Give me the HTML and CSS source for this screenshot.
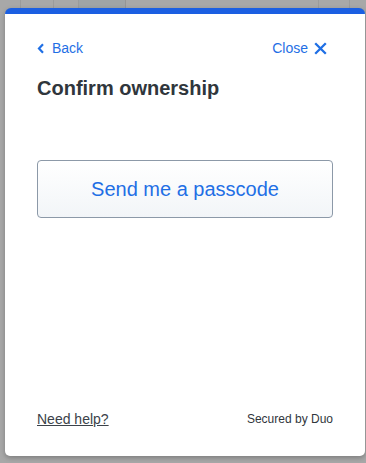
FILE: index.html
```html
<!DOCTYPE html>
<html lang="en">
<head>
<meta charset="utf-8">
<title>Confirm ownership</title>
<link rel="stylesheet" href="styles.css">
</head>
<body>
<div class="backdrop">
  <div class="bg-strip">
    <span class="bg-cell c1"></span>
    <span class="bg-cell c2"></span>
    <span class="bg-cell c3"></span>
  </div>
</div>
<div class="card">
  <div class="nav">
    <a class="link back" href="#">
      <svg width="8" height="11" viewBox="0 0 8 11"><path d="M6 1.2 L2 5.5 L6 9.8" fill="none" stroke="currentColor" stroke-width="2.2"/></svg>
      <span>Back</span>
    </a>
    <a class="link close" href="#">
      <span>Close</span>
      <svg width="13" height="13" viewBox="0 0 13 13"><path d="M1.2 1.2 L11.8 11.8 M11.8 1.2 L1.2 11.8" fill="none" stroke="currentColor" stroke-width="2.3"/></svg>
    </a>
  </div>
  <h1 class="title">Confirm ownership</h1>
  <button class="action">Send me a passcode</button>
  <div class="footer">
    <a class="help" href="#">Need help?</a>
    <span class="secured">Secured by Duo</span>
  </div>
</div>
</body>
</html>
```
FILE: styles.css
```css
html, body {
  margin: 0;
  padding: 0;
}
body {
  width: 366px;
  height: 463px;
  background: #a8a8a8;
  font-family: "Liberation Sans", Arial, sans-serif;
  overflow: hidden;
  position: relative;
}
.backdrop {
  position: absolute;
  inset: 0;
}
.bg-strip {
  height: 10px;
  position: relative;
}
.bg-cell {
  position: absolute;
  top: 0;
  height: 10px;
  border-left: 1px solid #9b9b9b;
}
.c1 { left: 20px; width: 32px; border-right: 1px solid #9b9b9b; }
.c2 { left: 78px; width: 46px; background: #9fa4a6; border-right: 1px solid #959595; }
.c3 { left: 318px; width: 30px; border-right: 1px solid #9b9b9b; }
.card {
  position: relative;
  margin: 8px 0 0 5px;
  width: 360px;
  height: 448px;
  box-sizing: border-box;
  background: #fff;
  border-top: 6px solid #1b5fe2;
  border-radius: 6px 6px 5px 5px;
  box-shadow: 0 2px 5px rgba(0, 0, 0, 0.25);
  padding: 26px 32px 29px 32px;
  display: flex;
  flex-direction: column;
}
.nav {
  display: flex;
  justify-content: space-between;
  align-items: center;
  height: 16px;
}
.link {
  display: flex;
  align-items: center;
  color: #1f6fe5;
  text-decoration: none;
  font-size: 14px;
  line-height: 16px;
}
.back svg { margin-right: 7px; }
.close { margin-right: 6px; }
.close svg { margin-left: 6px; }
.title {
  margin: 20px 0 0 0;
  font-size: 20px;
  line-height: 24px;
  font-weight: bold;
  color: #30363c;
}
.action {
  margin-top: 60px;
  height: 58px;
  width: 100%;
  border: 1px solid #8c99a8;
  border-radius: 4px;
  background: linear-gradient(#ffffff, #f2f5f8);
  color: #1f6fe5;
  font-family: "Liberation Sans", Arial, sans-serif;
  font-size: 20px;
  padding: 0;
}
.footer {
  margin-top: auto;
  display: flex;
  justify-content: space-between;
  align-items: center;
  height: 16px;
}
.help {
  font-size: 14px;
  color: #3b4249;
  text-decoration: underline;
}
.secured {
  font-size: 12px;
  color: #30363c;
}
```
